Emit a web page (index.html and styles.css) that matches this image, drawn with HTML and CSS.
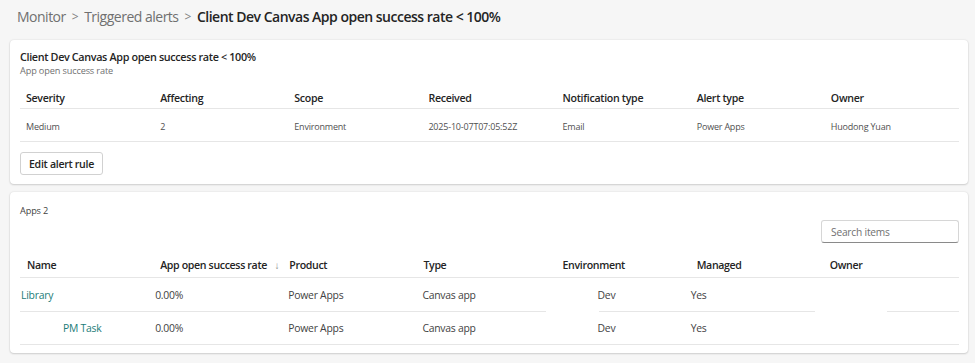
FILE: index.html
```html
<!DOCTYPE html>
<html>
<head>
<meta charset="utf-8">
<link rel="stylesheet" href="styles.css">
</head>
<body>
<div class="page">
  <nav class="crumbs">
    <span class="crumb">Monitor</span>
    <span class="sep">&gt;</span>
    <span class="crumb">Triggered alerts</span>
    <span class="sep">&gt;</span>
    <span class="crumb current">Client Dev Canvas App open success rate &lt; 100%</span>
  </nav>

  <section class="card card-alert">
    <div class="alert-title">Client Dev Canvas App open success rate &lt; 100%</div>
    <div class="alert-sub">App open success rate</div>
    <div class="grid7 head1">
      <div>Severity</div><div>Affecting</div><div>Scope</div><div>Received</div><div>Notification type</div><div>Alert type</div><div>Owner</div>
    </div>
    <div class="grid7 row1">
      <div>Medium</div><div>2</div><div>Environment</div><div>2025-10-07T07:05:52Z</div><div>Email</div><div>Power Apps</div><div>Huodong Yuan</div>
    </div>
    <button class="btn">Edit alert rule</button>
  </section>

  <section class="card card-apps">
    <div class="apps-count">Apps 2</div>
    <div class="search-row">
      <div class="search">Search items</div>
    </div>
    <div class="grid7 head2">
      <div class="h-name">Name</div>
      <div class="h-rate">App open success rate <span class="arrow">&#8595;</span></div>
      <div>Product</div><div>Type</div><div>Environment</div><div>Managed</div><div>Owner</div>
    </div>
    <div class="grid7 row2">
      <div class="c-name link">Library</div>
      <div class="c-rate">0.00%</div>
      <div class="c-prod">Power Apps</div>
      <div class="c-type">Canvas app</div>
      <div class="c-env">Dev</div>
      <div class="c-man">Yes</div>
      <div></div>
    </div>
    <div class="split-line">
      <span class="seg seg-a"></span><span class="seg seg-b"></span><span class="seg seg-c"></span>
    </div>
    <div class="grid7 row2 last">
      <div class="c-name link child">PM Task</div>
      <div class="c-rate">0.00%</div>
      <div class="c-prod">Power Apps</div>
      <div class="c-type">Canvas app</div>
      <div class="c-env">Dev</div>
      <div class="c-man">Yes</div>
      <div></div>
    </div>
  </section>
</div>
</body>
</html>
```

FILE: styles.css
```css
* { box-sizing: border-box; }
html, body { margin: 0; padding: 0; }
body {
  background: #f6f6f6;
  font-family: "Open Sans", "Noto Sans", sans-serif;
  color: #242424;
  width: 975px;
  height: 363px;
  overflow: hidden;
}
.page {
  padding: 5px 7px 0 10px;
  display: flex;
  flex-direction: column;
}
.crumbs {
  display: flex;
  align-items: center;
  height: 22px;
  padding-left: 7px;
  font-size: 14px;
  color: #707070;
  gap: 6px;
  letter-spacing: -0.5px;
}
.crumb.current { color: #242424; font-weight: 600; }
.sep { font-size: 12px; color: #808080; }

.card {
  background: #fff;
  border-radius: 4px;
  box-shadow: 0 0 2px rgba(0,0,0,0.12), 0 1px 2px rgba(0,0,0,0.14);
  padding: 0 9px 0 10px;
}
.card-alert {
  margin-top: 13px;
  height: 144px;
  padding-top: 10px;
}
.alert-title {
  font-size: 10.8px;
  font-weight: 600;
  line-height: 14px;
  letter-spacing: -0.35px;
}
.alert-sub {
  font-size: 9.2px;
  color: #707070;
  line-height: 13px;
  letter-spacing: -0.15px;
}
.grid7 {
  display: grid;
  grid-template-columns: repeat(7, 1fr);
}
.head1 {
  margin-top: 10px;
  height: 22px;
  align-items: center;
  font-size: 10.6px;
  font-weight: 600;
  letter-spacing: -0.3px;
  border-bottom: 1px solid #e6e6e6;
}
.head1 > div { padding-left: 6px; }
.row1 > div { padding-left: 6px; padding-top: 3px; }
.row1 {
  height: 33px;
  align-items: center;
  font-size: 9px;
  letter-spacing: -0.2px;
  color: #505050;
  border-bottom: 1px solid #e6e6e6;
}
.btn {
  margin-top: 10px;
  width: 83px;
  height: 23px;
  font-family: inherit;
  font-size: 10.6px;
  font-weight: 600;
  color: #242424;
  background: #fff;
  border: 1px solid #d1d1d1;
  border-radius: 3px;
  padding: 0;
  letter-spacing: -0.3px;
}

.card-apps {
  margin-top: 8px;
  height: 161px;
  padding-top: 12px;
}
.apps-count {
  font-size: 9.2px;
  color: #424242;
  line-height: 14px;
  letter-spacing: -0.15px;
}
.search-row {
  display: flex;
  justify-content: flex-end;
  margin-top: 2px;
}
.search {
  width: 138px;
  height: 23px;
  border: 1px solid #d6d6d6;
  border-bottom-color: #8a8a8a;
  border-radius: 3px;
  font-size: 10.2px;
  letter-spacing: -0.2px;
  color: #707070;
  padding-left: 9px;
  display: flex;
  align-items: center;
}
.head2 {
  margin-top: 10px;
  height: 25px;
  align-items: center;
  font-size: 10.6px;
  font-weight: 600;
  letter-spacing: -0.35px;
  border-bottom: 1px solid #e6e6e6;
}
.head2 > div { padding-left: 6px; }
.head2 .h-name { padding-left: 7px; }
.head2 > div:nth-child(3) { padding-left: 1px; }
.head2 > div:nth-child(4) { padding-left: 1px; }
.head2 > div:nth-child(5) { padding-left: 6px; }
.head2 > div:nth-child(6) { padding-left: 6px; }
.head2 > div:nth-child(7) { padding-left: 5px; }
.h-rate { white-space: nowrap; }
.arrow { font-weight: 400; color: #8a8a8a; font-size: 10px; margin-left: 5px; }
.row2 {
  height: 33px;
  align-items: center;
  font-size: 10.4px;
  letter-spacing: -0.25px;
  color: #424242;
}
.row2.last { border-bottom: 1px solid #e6e6e6; }
.link { color: #1b7c78; }
.c-name { padding-left: 1px; }
.c-name.child { padding-left: 43px; }
.c-rate { padding-left: 1px; }
.c-prod { padding-left: 0; }
.c-type { padding-left: 0; }
.c-env { padding-left: 41px; }
.c-man { padding-left: 0; }
.split-line {
  display: flex;
  height: 1px;
}
.seg { height: 1px; background: #e6e6e6; }
.seg-a { width: 526px; }
.seg-b { width: 216px; margin-left: 53px; }
.seg-c { width: 72px; margin-left: 72px; }
```
